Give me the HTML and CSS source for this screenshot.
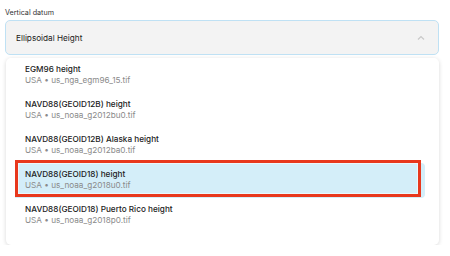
FILE: index.html
```html
<!DOCTYPE html>
<html>
<head>
  <title>Vertical datum</title>
  <link rel="stylesheet" href="styles.css">
</head>
<body>
  <div class="field">
    <label class="field-label">Vertical datum</label>
    <div class="select">
      <span class="select-value">Ellipsoidal Height</span>
      <svg class="chevron" width="8" height="5" viewBox="0 0 8 5">
        <path d="M1 4.5 L4 1.5 L7 4.5" fill="none" stroke="#c9c9c9" stroke-width="1.2"/>
      </svg>
    </div>
    <ul class="menu">
      <li class="option">
        <div class="option-title">EGM96 height</div>
        <div class="option-sub">USA • us_nga_egm96_15.tif</div>
      </li>
      <li class="option">
        <div class="option-title">NAVD88(GEOID12B) height</div>
        <div class="option-sub">USA • us_noaa_g2012bu0.tif</div>
      </li>
      <li class="option">
        <div class="option-title">NAVD88(GEOID12B) Alaska height</div>
        <div class="option-sub">USA • us_noaa_g2012ba0.tif</div>
      </li>
      <li class="option active">
        <div class="option-title">NAVD88(GEOID18) height</div>
        <div class="option-sub">USA • us_noaa_g2018u0.tif</div>
        <span class="marker"></span>
      </li>
      <li class="option">
        <div class="option-title">NAVD88(GEOID18) Puerto Rico height</div>
        <div class="option-sub">USA • us_noaa_g2018p0.tif</div>
      </li>
    </ul>
  </div>
</body>
</html>
```

FILE: styles.css
```css
body {
  margin: 0;
  padding: 8px 11px 0 5px;
  font-family: Inter, "Noto Sans", sans-serif;
  background: #ffffff;
  color: #222222;
}

.field-label {
  display: block;
  font-size: 7.2px;
  line-height: 10px;
  color: #333333;
  margin-bottom: 2px;
}

.select {
  display: flex;
  align-items: center;
  justify-content: space-between;
  height: 35px;
  box-sizing: border-box;
  padding: 0 13px 0 10px;
  background: #f3f3f3;
  border: 1px solid #bfe1f4;
  border-radius: 5px;
}

.select-value {
  font-size: 8.2px;
  color: #222222;
}

.chevron {
  display: block;
}

.menu {
  list-style: none;
  margin: 3px 0 0 1px;
  padding: 0 0 12px 0;
  background: #ffffff;
  border-radius: 5px;
  box-shadow: 0 1px 4px rgba(0, 0, 0, 0.16);
}

.option {
  position: relative;
  height: 35px;
  box-sizing: border-box;
  margin: 0 14px 0 9px;
  padding: 5px 10px 0 10px;
}

.option.active {
  background: #d4eef9;
  border-radius: 0 4px 4px 0;
}

.option-title {
  font-size: 8.2px;
  line-height: 12px;
  font-weight: 500;
  color: #222222;
}

.option-sub {
  font-size: 8.2px;
  line-height: 11px;
  color: #8a8a8a;
}

.marker {
  position: absolute;
  top: -3px;
  left: 0;
  right: 4px;
  bottom: 1px;
  border: 3px solid #e8381d;
  box-shadow: inset 0 0 0 1px rgba(255, 255, 255, 0.5);
}
```
